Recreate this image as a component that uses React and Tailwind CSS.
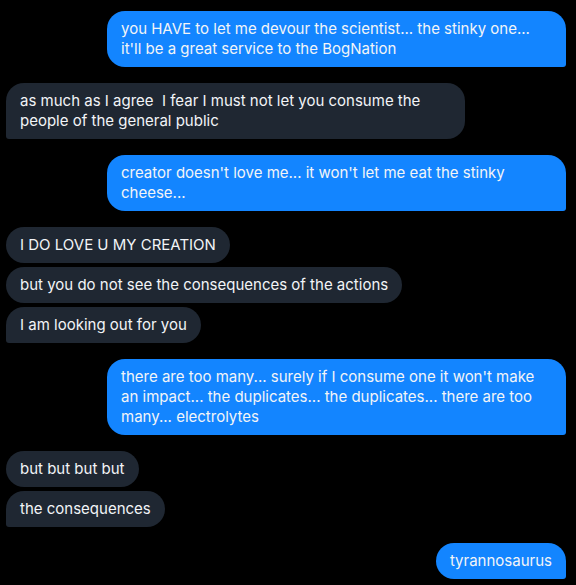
import React from "react";

const msgs = [
  { me: true, t: "you HAVE to let me devour the scientist... the stinky one... it'll be a great service to the BogNation" },
  { me: false, t: "as much as I agree  I fear I must not let you consume the people of the general public", last: true },
  { me: true, t: "creator doesn't love me... it won't let me eat the stinky cheese..." },
  { me: false, t: "I DO LOVE U MY CREATION" },
  { me: false, t: "but you do not see the consequences of the actions", grouped: true },
  { me: false, t: "I am looking out for you", grouped: true, last: true },
  { me: true, t: "there are too many... surely if I consume one it won't make an impact... the duplicates... the duplicates... there are too many... electrolytes" },
  { me: false, t: "but but but but" },
  { me: false, t: "the consequences", grouped: true, last: true },
  { me: true, t: "tyrannosaurus" },
];

export default function App() {
  return (
    <div
      className="w-[576px] h-[585px] bg-black overflow-hidden pt-[11px] pl-[6px] pr-[10px] flex flex-col"
      style={{ fontFamily: 'Inter, "Liberation Sans", sans-serif' }}
    >
      {msgs.map((m, i) => (
        <div
          key={i}
          className={
            (m.me ? "justify-end " : "justify-start ") +
            "flex " +
            (i === 0 ? "" : m.grouped ? "mt-1" : "mt-4")
          }
        >
          <div
            className={
              (m.me
                ? "bg-[#1385ff] rounded-[18px] rounded-br-[3px] "
                : m.last
                ? "bg-[#1f2732] rounded-[18px] rounded-bl-[3px] "
                : "bg-[#1f2732] rounded-[18px] ") +
              "max-w-[459px] px-[14px] py-2 text-[15px] leading-5 text-[#f2f4f7] whitespace-pre-wrap"
            }
          >
            {m.t}
          </div>
        </div>
      ))}
    </div>
  );
}
